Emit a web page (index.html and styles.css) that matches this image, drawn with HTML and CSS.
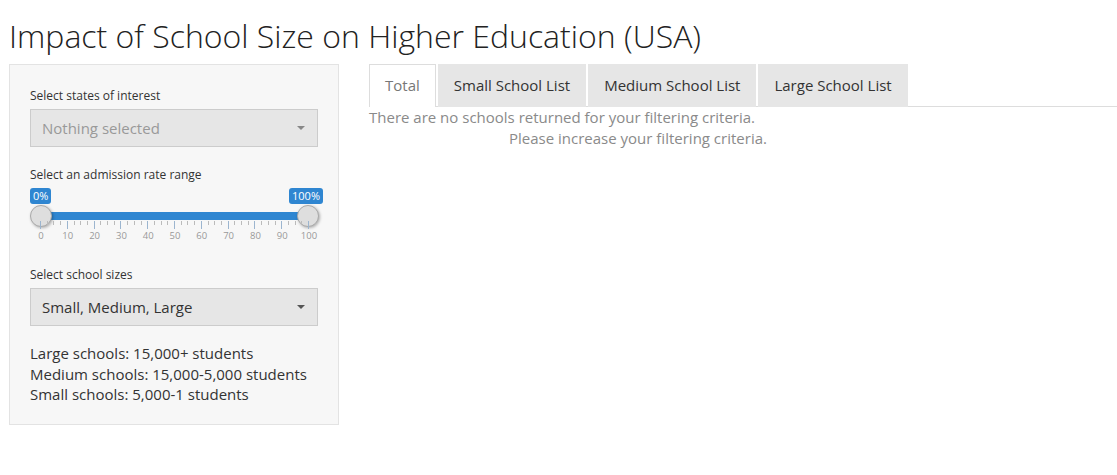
FILE: index.html
```html
<!DOCTYPE html>
<html lang="en">
<head>
<meta charset="utf-8">
<title>Impact of School Size on Higher Education (USA)</title>
<link rel="stylesheet" href="styles.css">
</head>
<body>
<h1 class="title">Impact of School Size on Higher Education (USA)</h1>
<div class="layout">
  <aside class="sidebar">
    <div class="group">
      <label class="lbl">Select states of interest</label>
      <div class="select disabled"><span>Nothing selected</span><span class="caret"></span></div>
    </div>
    <div class="group slider-group">
      <label class="lbl">Select an admission rate range</label>
      <div class="irs">
        <span class="badge badge-from">0%</span>
        <span class="badge badge-to">100%</span>
        <div class="track"></div>
        <span class="handle handle-from"></span>
        <span class="handle handle-to"></span>
        <div class="grid" id="grid"></div>
      </div>
    </div>
    <div class="group">
      <label class="lbl">Select school sizes</label>
      <div class="select"><span>Small, Medium, Large</span><span class="caret"></span></div>
    </div>
    <div class="notes">
      <div>Large schools: 15,000+ students</div>
      <div>Medium schools: 15,000-5,000 students</div>
      <div>Small schools: 5,000-1 students</div>
    </div>
  </aside>
  <main class="main">
    <ul class="tabs">
      <li class="tab active">Total</li>
      <li class="tab">Small School List</li>
      <li class="tab">Medium School List</li>
      <li class="tab">Large School List</li>
    </ul>
    <div class="message">
      <div>There are no schools returned for your filtering criteria.</div>
      <div class="indent">Please increase your filtering criteria.</div>
    </div>
  </main>
</div>
<script>
  (function () {
    var g = document.getElementById('grid');
    var html = '';
    for (var i = 0; i <= 40; i++) {
      var v = i * 2.5;
      var major = i % 4 === 0;
      html += '<span class="tick ' + (major ? 'major' : 'minor') + '" style="left:' + v + '%"></span>';
      if (major) html += '<span class="num" style="left:' + v + '%">' + v + '</span>';
    }
    g.innerHTML = html;
  })();
</script>
</body>
</html>
```
FILE: styles.css
```css
* { box-sizing: border-box; }
body {
  margin: 0;
  font-family: "Open Sans", "Liberation Sans", sans-serif;
  color: #333;
  background: #fff;
}
.title {
  margin: 0;
  padding: 16px 0 0 9px;
  height: 64px;
  font-size: 32px;
  font-weight: 300;
  line-height: 40px;
  color: #222;
}
.layout {
  display: flex;
  align-items: flex-start;
}
.sidebar {
  margin-left: 9px;
  width: 330px;
  background: #f7f7f7;
  border: 1px solid #e3e3e3;
  padding: 20px 20px 19px;
}
.group { margin-bottom: 17px; }
.lbl {
  display: block;
  font-size: 12px;
  line-height: 17px;
  margin: 2px 0 5px;
  color: #333;
}
.select {
  height: 38px;
  border: 1px solid #ccc;
  background: #e6e6e6;
  display: flex;
  align-items: center;
  justify-content: space-between;
  padding: 0 12px 0 11px;
  font-size: 15px;
  color: #333;
}
.select.disabled { color: #999; }
.caret {
  width: 0; height: 0;
  border-left: 4px solid transparent;
  border-right: 4px solid transparent;
  border-top: 4px solid #555;
}
.select.disabled .caret { border-top-color: #888; }
.slider-group { margin-bottom: 17px; }
.slider-group .lbl { margin: 0 0 2px; padding-top: 2px; }
.irs {
  position: relative;
  height: 64px;
}
.track {
  position: absolute;
  left: 10px; right: 10px;
  top: 27px; height: 8px;
  background: #2f86d1;
}
.badge {
  position: absolute;
  top: 3px;
  background: #2f86d1;
  color: #fff;
  font-size: 11px;
  line-height: 14px;
  padding: 1px 3px;
  border-radius: 3px;
}
.badge-from { left: 0; }
.badge-to { right: -5px; }
.handle {
  position: absolute;
  top: 20px;
  width: 22px; height: 22px;
  border-radius: 50%;
  background: #dedede;
  border: 1px solid #aaa;
  box-shadow: 1px 1px 3px rgba(0,0,0,0.3);
}
.handle-from { left: 0; }
.handle-to { right: -1px; }
.grid {
  position: absolute;
  left: 10px; right: 10px;
  top: 36px; height: 24px;
}
.tick {
  position: absolute;
  top: 0;
  width: 1px;
}
.tick.major { height: 8px; background: #9cb5cf; }
.tick.minor { height: 4px; background: #bbb; }
.num {
  position: absolute;
  top: 9px;
  font-size: 9.5px;
  line-height: 12px;
  color: #999;
  transform: translateX(-50%);
  margin-left: 1px;
}
.notes {
  font-size: 15px;
  line-height: 20.5px;
  color: #333;
}
.main {
  flex: 1;
  margin-left: 30px;
}
.tabs {
  list-style: none;
  margin: 0;
  padding: 0;
  display: flex;
  border-bottom: 1px solid #ddd;
}
.tab {
  font-size: 15px;
  line-height: 20px;
  padding: 10px 15px;
  border: 1px solid transparent;
  border-bottom: none;
  background: #e6e6e6;
  margin-right: 2px;
  margin-bottom: -1px;
  height: 43px;
  color: #333;
}
.tab.active {
  background: #fff;
  border-color: #ddd;
  color: #777;
}
.message {
  font-size: 15px;
  line-height: 21px;
  color: #8a8a8a;
}
.indent { padding-left: 140px; }
```
